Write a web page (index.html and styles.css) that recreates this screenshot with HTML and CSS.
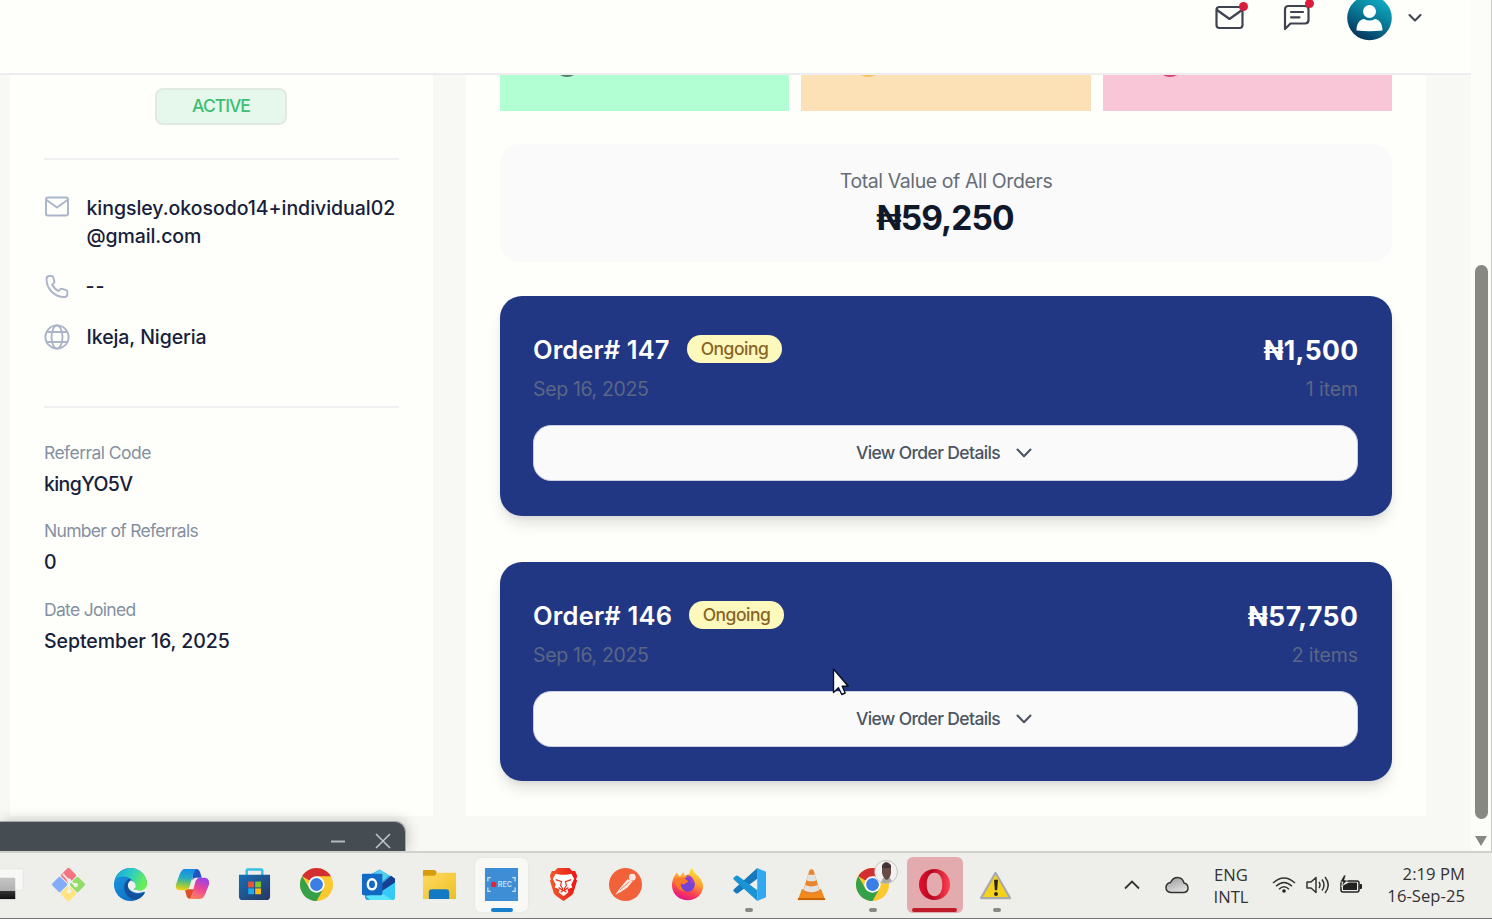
FILE: index.html
```html
<!DOCTYPE html>
<html lang="en">
<head>
<meta charset="utf-8">
<title>Customer Details</title>
<link rel="stylesheet" href="styles.css">
</head>
<body>
<div class="browser">
  <div class="page">
    <header class="topbar">
      <span class="notify"><svg width="30" height="28" viewBox="0 0 30 28" fill="none" stroke="#3f4350" stroke-width="2.2" stroke-linejoin="round" stroke-linecap="round"><rect x="1.5" y="4" width="26" height="21" rx="3"/><path d="M2 7l12.5 9L27 7"/></svg><i class="dot"></i></span>
      <span class="notify chat"><svg width="28" height="30" viewBox="0 0 28 30" fill="none" stroke="#3f4350" stroke-width="2.2" stroke-linejoin="round" stroke-linecap="round"><path d="M2 27V7.500Q2 4 5.500 4H22Q25.500 4 25.500 7.500V18Q25.500 21.500 22 21.500H7.500Z"/><path d="M8 10H20M8 15.300H16.500"/></svg><i class="dot"></i></span>
      <svg class="avatar" width="46" height="46" viewBox="0 0 46 46"><defs><linearGradient id="av" x1=".8" y1="0" x2=".25" y2="1"><stop offset="0" stop-color="#12b3c8"/><stop offset=".5" stop-color="#087795"/><stop offset="1" stop-color="#052f58"/></linearGradient></defs><circle cx="22.500" cy="23" r="22.300" fill="url(#av)"/><circle cx="22.500" cy="16.500" r="6.500" fill="#fff"/><path d="M9.500 35.500C9.500 27 14 24.500 17 24Q22.500 27 28 24C31 24.500 35.500 27 35.500 35.500Q22.500 37 9.500 35.500Z" fill="#fff"/></svg>
      <svg class="caret" width="16" height="12" viewBox="0 0 16 12" fill="none" stroke="#3f4350" stroke-width="2.100" stroke-linecap="round" stroke-linejoin="round"><path d="M2.500 3L8 8.500L13.500 3"/></svg>
    </header>
    <main class="content">
      <aside class="profile">
        <div class="status">ACTIVE</div>
        <ul class="contact">
          <li><svg width="26" height="28" viewBox="0 0 26 28" fill="none" stroke="#abb4c8" stroke-width="1.900" stroke-linejoin="round"><rect x="2" y="3.500" width="22" height="18" rx="2"/><path d="M2.500 6L13 13.500L23.500 6"/></svg><span class="email">kingsley.okosodo14+individual02<br><span class="domain">@gmail.com</span></span></li>
          <li><svg width="26" height="28" viewBox="0 0 26 28" fill="none" stroke="#abb4c8" stroke-width="1.900" stroke-linejoin="round"><path d="M2.500 7Q2.500 4 5.500 4H7.700Q8.800 4 9.200 5.200L10.400 9.300Q10.700 10.500 9.700 11.300L8.200 12.500Q10.300 17 14.800 19L16 17.500Q16.800 16.500 18 16.900L22.200 18.200Q23.400 18.600 23.400 19.800V22Q23.400 25 20.400 25C10.500 25 2.500 17 2.500 7Z"/></svg><span class="none">--</span></li>
          <li><svg width="26" height="28" viewBox="0 0 26 28" fill="none" stroke="#abb4c8" stroke-width="1.900"><circle cx="13" cy="14" r="11.600"/><ellipse cx="13" cy="14" rx="5.500" ry="11.600"/><path d="M2.300 9H23.700M2.300 19H23.700"/></svg><span class="place">Ikeja, Nigeria</span></li>
        </ul>
        <dl class="facts">
          <dt class="t-code">Referral Code</dt><dd class="v-code">kingYO5V</dd>
          <dt class="t-num">Number of Referrals</dt><dd>0</dd>
          <dt class="t-join">Date Joined</dt><dd class="v-join">September 16, 2025</dd>
        </dl>
      </aside>
      <section class="orders">
        <div class="stats"><div class="stat green"><i></i></div><div class="stat orange"><i></i></div><div class="stat pink"><i></i></div></div>
        <div class="total"><span class="total-label">Total Value of All Orders</span><strong>₦59,250</strong></div>
        <article class="order">
          <div class="row head"><h2>Order# 147</h2><span class="pill">Ongoing</span><b class="a1">₦1,500</b></div>
          <div class="row sub"><span class="date">Sep 16, 2025</span><span class="items">1 item</span></div>
          <div class="details"><span>View Order Details</span><svg width="18" height="12" viewBox="0 0 18 12" fill="none" stroke="#4b5563" stroke-width="2.100" stroke-linecap="round" stroke-linejoin="round"><path d="M2.500 2.500L9 9.200L15.500 2.500"/></svg></div>
        </article>
        <article class="order">
          <div class="row head"><h2 class="n146">Order# 146</h2><span class="pill">Ongoing</span><b class="a2">₦57,750</b></div>
          <div class="row sub"><span class="date">Sep 16, 2025</span><span class="items">2 items</span></div>
          <div class="details"><span>View Order Details</span><svg width="18" height="12" viewBox="0 0 18 12" fill="none" stroke="#4b5563" stroke-width="2.100" stroke-linecap="round" stroke-linejoin="round"><path d="M2.500 2.500L9 9.200L15.500 2.500"/></svg></div>
        </article>
      </section>
    </main>
  </div>
  <div class="scrollbar"><i class="thumb"></i><i class="arrow"></i></div>
</div>
<div class="window"><svg width="16" height="16" viewBox="0 0 16 16" stroke="#b4b9bc" stroke-width="1.800"><path d="M1 8.500H15"/></svg><svg width="16" height="16" viewBox="0 0 16 16" stroke="#c4c8ca" stroke-width="1.500"><path d="M1 1L15 15M15 1L1 15"/></svg></div>
<svg class="cursor" width="18" height="28" viewBox="0 0 18 28"><path d="M1.500 1V24.500L6.500 19.800L9.800 26.500L13.200 25L10.200 18.300H16.200Z" fill="#fff" stroke="#0b1020" stroke-width="1.400" stroke-linejoin="round"/></svg>
<footer class="taskbar">
  <div class="apps">
    <span class="app"><svg viewBox="0 0 36 36"><defs><linearGradient id="tv" x1="0" y1="0" x2="0" y2="1"><stop offset="0" stop-color="#c6c6c6"/><stop offset=".6" stop-color="#b0b0b0"/><stop offset=".63" stop-color="#333"/><stop offset="1" stop-color="#111"/></linearGradient></defs><path d="M0 2H35V24H0Z" fill="#f8f8f7" stroke="#dededb" stroke-width=".5"/><path d="M0 11H27V33H0Z" fill="url(#tv)"/></svg></span>
    <span class="app"><svg viewBox="0 0 36 36"><g transform="rotate(45 18 18)"><rect x="5.500" y="5.500" width="12" height="12" rx="1.500" fill="#f17480"/><rect x="18.500" y="5.500" width="12" height="12" rx="1.500" fill="#92dd67"/><rect x="5.500" y="18.500" width="12" height="12" rx="1.500" fill="#83adfa"/><rect x="18.500" y="18.500" width="12" height="12" rx="1.500" fill="#ffe47c"/></g><path d="M12 7L18.500 14V25M18.500 13L25 19" stroke="#f3f0ea" stroke-width="1.800" fill="none"/><circle cx="18.500" cy="14" r="2.200" fill="#f3f0ea"/><circle cx="18.500" cy="25" r="2.400" fill="#f3f0ea"/><circle cx="25.500" cy="18.500" r="2.300" fill="#f3f0ea"/></svg></span>
    <span class="app"><svg viewBox="0 0 36 36"><defs><linearGradient id="ed" x1="0" y1="0" x2="1" y2=".4"><stop offset="0" stop-color="#1a9fe5"/><stop offset=".55" stop-color="#30cfbd"/><stop offset="1" stop-color="#67ee55"/></linearGradient><linearGradient id="ee" x1="0" y1="0" x2="1" y2="1"><stop offset="0" stop-color="#1a9be5"/><stop offset="1" stop-color="#0b62b7"/></linearGradient></defs><path d="M35 18A17 17 0 1 0 33 26Q29 24 25 23L22 14Z" fill="url(#ee)"/><path d="M2 13C5 0 23-3 31 7Q35 12 35 18C34 25 26 25 22 23C23 22 24 19 21 15C17 9 7 8 2 13Z" fill="url(#ed)"/><path d="M17 12C8 16 10 31 23 34Q30 32 33 26C26 30 17 27 16 21Q15 17 19 15Z" fill="#14509d"/><path d="M18 14C14 17 15 22 18 24C23 28 29 27 34 24.500L35 23.500Q30 25.500 21 23C24 22 24 19 22 16Q20 14 18 14Z" fill="#eef1ee"/></svg></span>
    <span class="app"><svg viewBox="0 0 36 36"><defs><linearGradient id="c1" x1=".3" y1="0" x2=".2" y2="1"><stop offset="0" stop-color="#158ee5"/><stop offset=".4" stop-color="#23abc1"/><stop offset=".7" stop-color="#80c654"/><stop offset="1" stop-color="#ffd20b"/></linearGradient><linearGradient id="c2" x1=".6" y1="0" x2=".2" y2="1"><stop offset="0" stop-color="#9e42e5"/><stop offset=".45" stop-color="#e94695"/><stop offset="1" stop-color="#ff8a5c"/></linearGradient></defs><path d="M18 2H22Q25 2 26 6L27.500 11H21Q19 11 18 14Z" fill="#2453c5"/><path d="M10 23H20L17 30Q16 33 14 32.500Q12.500 32 12 30Z" fill="#e04f2c"/><path d="M10 2H22Q20 3 19 7L15 20Q14 24 10 24H5Q0 24 1 18L5 7Q7 2 10 2Z" fill="url(#c1)"/><path d="M13.500 33Q16.500 32 17.500 28L21 15Q22.500 11 26 11H31Q36 12 35 18L31 28Q29 33 25 33Z" fill="url(#c2)"/></svg></span>
    <span class="app"><svg viewBox="0 0 36 36"><defs><linearGradient id="st" x1="0" y1="0" x2="1" y2="1"><stop offset="0" stop-color="#1770b9"/><stop offset="1" stop-color="#29365f"/></linearGradient></defs><path d="M10 10V3.500Q10 2.500 11 2.500H25Q26 2.500 26 3.500V10" fill="none" stroke="#38bde5" stroke-width="2.500"/><path d="M2 8H34V30Q34 34 30 34H6Q2 34 2 30Z" fill="url(#st)"/><path d="M11.500 15h6v6h-6z" fill="#f0513b"/><path d="M18.700 15h6v6h-6z" fill="#82c528"/><path d="M11.500 22h6v6h-6z" fill="#1faaf0"/><path d="M18.700 22h6v6h-6z" fill="#fdba12"/></svg></span>
    <span class="app"><svg viewBox="0 0 36 36"><circle cx="18" cy="18" r="17" fill="#fbc82d"/><path d="M18 18L3.300 9.500A17 17 0 0 1 32.700 9.500H18Z" fill="#d32f32"/><path d="M3.300 9.500A17 17 0 0 0 18 35L25.300 22.200L18 18L10.700 22.200Z" fill="#34a049"/><circle cx="18" cy="18" r="8.400" fill="#fff"/><circle cx="18" cy="18" r="6.600" fill="#397fe5"/></svg></span>
    <span class="app"><svg viewBox="0 0 36 36"><path d="M4 11L19 2.500L35 12V30Q35 34 31 34H8Q4 34 4 30Z" fill="#2ba0e0"/><path d="M8 10L19 2.500L29 9L18 18Z" fill="#53d0ed"/><path d="M17 21L31 9L35 12V16L20 26Z" fill="#173f91"/><path d="M20 26L35 16V30Q35 34 31 34H9Z" fill="#35c9f6"/><path d="M5 30L20 26L32 34H9Z" fill="#58e4fb"/><rect x="1" y="7" width="21" height="22" rx="1.500" fill="#126ac4"/><ellipse cx="11.300" cy="17.800" rx="4.300" ry="5.200" fill="none" stroke="#fff" stroke-width="2.500"/></svg></span>
    <span class="app"><svg viewBox="0 0 36 36"><defs><linearGradient id="fo" x1="0" y1="0" x2="1" y2="1"><stop offset="0" stop-color="#ffda62"/><stop offset="1" stop-color="#eebf24"/></linearGradient></defs><path d="M1 4Q1 3 2 3H12Q15 3 15 6V12H1Z" fill="#d69c0a"/><path d="M1 9H13L16 6H35V33H1Z" fill="url(#fo)"/><path d="M7 33V26Q7 23 10 23H25Q28 23 28 26V33Z" fill="#1479c4"/></svg></span>
    <span class="app active"><svg viewBox="0 0 36 36"><path d="M1 1H35V35H1Z" fill="#3e8ed6"/><path d="M7 11H4V15M29 11H32V15M7 25H4V21M29 25H32V21" fill="none" stroke="#c8e1f4" stroke-width="1.300"/><circle cx="10" cy="18" r="2.800" fill="#dd263b"/><text x="14.200" y="20.800" class="rec">REC</text></svg><i class="run blue"></i></span>
    <span class="app"><svg viewBox="0 0 36 36"><defs><linearGradient id="br"><stop offset="0" stop-color="#f05a2b"/><stop offset="1" stop-color="#ec1414"/></linearGradient></defs><path d="M12 1H24L27 4L30 4L32 9L31 13L32 14L28 27Q27 29 18 35Q9 29 8 27L4 14L5 13L4 9L6 4H9Z" fill="url(#br)"/><path d="M10 7L15 8H21L26 7L29 12L26 18L27 21L22 23L23 26L18 30L13 26L14 23L9 21L10 18L7 12Z" fill="#fff"/><path d="M10 13L16 15L15 19L17 22V24L13 21M26 13L20 15L21 19L19 22V24L23 21M15 26L18 24L21 26" fill="none" stroke="#ed2d20" stroke-width="1.200"/></svg></span>
    <span class="app"><svg viewBox="0 0 36 36"><circle cx="18" cy="18" r="17" fill="#f1623a"/><path d="M7.500 28.500L12 22L20 12.500L25.500 14.500L20 21L13.500 25.500Z" fill="#fde8df"/><circle cx="25" cy="10.500" r="3.500" fill="#fde8df"/><path d="M12 24L22 15" stroke="#ee714e" stroke-width=".9"/></svg></span>
    <span class="app"><svg viewBox="0 0 36 36"><defs><linearGradient id="ff" x1=".8" y1="0" x2=".4" y2="1"><stop offset="0" stop-color="#fff33f"/><stop offset=".45" stop-color="#ff9b2d"/><stop offset=".75" stop-color="#fb4154"/><stop offset="1" stop-color="#e31587"/></linearGradient></defs><path d="M7 6L10 10L14 5L15 9Q18 8 20 7Q20 3 23 1Q25 7 29 9Q34 15 34 20C33 39 3 39 2 19Q2 12 7 6Z" fill="url(#ff)"/><circle cx="18" cy="18" r="7.500" fill="#7542d6"/><path d="M5 13Q12 7 19 15L14 18L11 17Q11 23 16 25Q6 25 5 13Z" fill="#fc7a29"/><path d="M17 10Q23 10 23 17" stroke="#a83bc8" stroke-width="3" fill="none"/></svg></span>
    <span class="app"><svg viewBox="0 0 36 36"><path d="M26 1L35 5V31L26 35Z" fill="#31a8f0"/><path d="M26 1V12L6 27Q4 28 3 26L1.500 25Q1 24 2 23Z" fill="#1579bc"/><path d="M26 35V24L6 9Q4 8 3 10L1.500 11Q1 12 2 13Z" fill="#1b94d6"/></svg><i class="run"></i></span>
    <span class="app"><svg viewBox="0 0 36 36"><path d="M8 23H28L32 34H4Z" fill="#f28a1d"/><path d="M16 3Q18 1.500 20 3L27 26Q18 31 9 26Z" fill="#e9852d"/><path d="M14.500 8H21.500L23 13.500Q18 16 13 13.500ZM11.500 18.500Q18 21.500 24.500 18.500L26 24Q18 28 10 24Z" fill="#e3e2df"/><path d="M4 32H32V34H4Z" fill="#c96205"/></svg></span>
    <span class="app"><svg viewBox="0 0 36 36"><circle cx="18" cy="18" r="17" fill="#fbc82d"/><path d="M18 18L3.300 9.500A17 17 0 0 1 32.700 9.500H18Z" fill="#d32f32"/><path d="M3.300 9.500A17 17 0 0 0 18 35L25.300 22.200L18 18L10.700 22.200Z" fill="#34a049"/><circle cx="18" cy="18" r="8.400" fill="#fff"/><circle cx="18" cy="18" r="6.600" fill="#397fe5"/></svg><svg class="face" viewBox="0 0 24 24"><circle cx="12" cy="12" r="11.500" fill="#f2f1ef" stroke="#999" stroke-width=".5"/><path d="M7 22L9 18H16L18 21Q13 25 7 22Z" fill="#aaa"/><path d="M8 5Q12-1 17 5V13Q16 19 12.500 20Q9 18 8 13Z" fill="#684a44"/><path d="M8 6Q12-1 17 6V8H8Z" fill="#40343a"/></svg><i class="run"></i></span>
    <span class="app opera"><svg viewBox="0 0 36 36"><defs><linearGradient id="op" x1="0" x2="1"><stop offset="0" stop-color="#e4102c"/><stop offset=".4" stop-color="#b40920"/><stop offset="1" stop-color="#ff4054"/></linearGradient></defs><path fill-rule="evenodd" d="M18 2C9 2 2 9 2 18S9 34 18 34S34 27 34 18S27 2 18 2ZM18 6C23 6 26 11 26 18S23 30 18 30S10 25 10 18S13 6 18 6Z" fill="url(#op)"/></svg><i class="run red"></i></span>
    <span class="app"><svg viewBox="0 0 36 36"><path d="M17 6L32 32H2Z" fill="#f4d21c" stroke="#aaa" stroke-width="2.200" stroke-linejoin="round"/><path d="M15.500 13H19.500L18.700 24H16.300Z" fill="#282411"/><circle cx="17.500" cy="27.800" r="2" fill="#282411"/></svg><i class="run"></i></span>
  </div>
  <div class="tray">
    <svg class="up" width="18" height="12" viewBox="0 0 18 12" fill="none" stroke="#333" stroke-width="1.800"><path d="M2 9.500L9 2.500L16 9.500"/></svg>
    <svg class="cloud" width="26" height="20" viewBox="0 0 26 20"><defs><linearGradient id="cl" x1="0" y1="0" x2=".5" y2="1"><stop offset="0" stop-color="#999"/><stop offset="1" stop-color="#ddd"/></linearGradient></defs><path d="M7 17.500Q2 17 2 12.500Q2 8.500 6.500 7.500Q9 2.500 13.500 2.500Q18.500 2.500 20 8Q24 9 24 13Q24 17 20 17.500Z" fill="url(#cl)" stroke="#333" stroke-width="1.500"/></svg>
    <div class="lang">ENG<br>INTL</div>
    <svg class="wifi" width="24" height="20" viewBox="0 0 24 20" fill="none" stroke="#333" stroke-width="1.500"><path d="M1 8Q12-2 23 8M4 11.300Q12 3.800 20 11.300M7 14.300Q12 9.200 17 14.300"/><circle cx="12" cy="16" r="1.800" fill="#222" stroke="none"/></svg>
    <svg class="vol" width="26" height="20" viewBox="0 0 26 20" fill="none" stroke="#333" stroke-width="1.500" stroke-linejoin="round"><path d="M2 7H6L11 2.500V17.500L6 13H2Z"/><path d="M14 7Q16 10 14 13M17 4.500Q21 10 17 15.500M20 2Q26.500 10 20 18"/></svg>
    <svg class="bat" width="24" height="20" viewBox="0 0 24 20"><rect x="2" y="6" width="18" height="11" rx="2" fill="none" stroke="#222" stroke-width="1.500"/><path d="M4 15V10.500L10 7.500H18V15Z" fill="#222"/><path d="M20.500 9H22Q23 9 23 10V13Q23 14 22 14H20.500Z" fill="#222"/><path d="M5 0L1 7H4L2.500 12L8.500 5H5.500L7 0Z" fill="#222" stroke="#eeeeea" stroke-width=".7"/></svg>
    <div class="clock">2:19 PM<br>16-Sep-25</div>
  </div>
</footer>
</body>
</html>
```
FILE: styles.css
```css
* { box-sizing: border-box; }
body { margin: 0; width: 1492px; height: 919px; overflow: hidden; position: relative; display: flex; flex-direction: column; font-family: Inter, "Liberation Sans", sans-serif; color: #17203a; background: #f8f9f5; }
svg { display: block; flex: none; }
h2, ul, dl, dd { margin: 0; padding: 0; }
.browser { display: flex; height: 851px; flex: none; }
.page { width: 1471px; display: flex; flex-direction: column; }
.topbar { height: 75px; flex: none; background: #fefffb; border-bottom: 2px solid #ededf0; display: flex; justify-content: flex-end; align-items: flex-start; padding-right: 48px; }
.notify { position: relative; margin: 3px 38px 0 0; }
.notify.chat { margin: 2px 36.5px 0 0; }
.dot { position: absolute; right: -3px; top: -1px; width: 9px; height: 9px; border-radius: 50%; background: #d91d3b; }
.chat .dot { right: -3px; top: -3px; }
.avatar { margin-top: -5px; }
.caret { margin: 12px 0 0 14px; }
.content { display: flex; gap: 33px; padding-left: 10px; height: 741px; }
.profile { width: 423px; background: #fefffb; padding: 13px 34px 0; }
.status { width: 132px; height: 37px; margin: 0 0 0 111px; border: 2px solid #e2e9e3; border-radius: 8px; background: #e6f7ec; color: #3dbe73; font-size: 17.500px; font-weight: 500; letter-spacing: -1px; display: flex; align-items: center; justify-content: center; padding-bottom: 2px; }
.contact { list-style: none; margin-top: 33px; height: 250px; border: solid #f0f1f3; border-width: 2px 0; padding-top: 34px; }
.contact li { display: flex; gap: 16.500px; font-size: 19.500px; font-weight: 500; line-height: 28px; margin-bottom: 23px; }
.contact li:first-child { margin-bottom: 22px; }
.email { letter-spacing: -.04px; white-space: nowrap; }
.domain { letter-spacing: -.1px; }
.none { letter-spacing: 1px; margin-left: -1px; }
.place { letter-spacing: -.07px; }
.facts { padding-top: 29.700px; }
dt { font-size: 17.500px; line-height: 30px; color: #8590a2; font-weight: 400; letter-spacing: -.7px; }
.t-code { letter-spacing: -.55px; }
dd { font-size: 19.500px; line-height: 33px; font-weight: 500; margin-bottom: 15.700px; letter-spacing: -.3px; }
.v-code { letter-spacing: -.6px; }
.v-join { letter-spacing: -.07px; }
.orders { width: 960px; background: #fefffb; padding: 0 34px; }
.stats { display: grid; grid-template-columns: 1fr 1fr 1fr; gap: 12px; height: 36px; }
.stat { position: relative; overflow: hidden; }
.green { background: #b2ffd3; color: #4e8068; }
.orange { background: #fce0b6; color: #f5c35c; }
.pink { background: #f9c6d7; color: #dc3f6e; }
.stat i { position: absolute; left: 54px; top: -24px; width: 26px; height: 26px; border-radius: 50%; background: currentColor; }
.total { height: 118px; margin-top: 33px; border-radius: 20px; background: #fafafb; display: flex; flex-direction: column; align-items: center; padding-top: 23px; }
.total-label { font-size: 19.500px; line-height: 28px; color: #666d78; letter-spacing: -.4px; }
.total strong { font-size: 33.500px; line-height: 47px; font-weight: 700; letter-spacing: -.9px; margin-right: 2px; color: #10182c; }
.order { height: 220px; margin-top: 34px; border-radius: 22px; background: #223784; padding: 35px 34px 0 33px; box-shadow: 0 10px 15px -3px rgba(0,0,0,.12), 0 3px 6px -2px rgba(0,0,0,.08); }
.order + .order { margin-top: 46px; height: 219px; }
.row { display: flex; align-items: center; }
.head { height: 36px; }
h2 { color: #fff; font-size: 25.500px; line-height: 36px; font-weight: 600; letter-spacing: .1px; width: 154px; white-space: nowrap; padding-top: 1px; }
h2.n146 { width: 156px; letter-spacing: .2px; }
.pill { width: 95px; height: 28px; border-radius: 14px; background: #fdf9bd; color: #886425; font-size: 17.500px; font-weight: 500; letter-spacing: -.5px; display: flex; align-items: center; justify-content: center; padding-bottom: 1px; }
.head b { margin-left: auto; margin-right: -.4px; color: #fff; font-size: 26.500px; font-weight: 700; letter-spacing: .35px; line-height: 34px; padding-top: 1px; }
.head .a2 { letter-spacing: .5px; }
.sub { justify-content: space-between; height: 43px; padding-top: 1px; color: #5b6684; font-size: 19.500px; letter-spacing: -.1px; }
.date { letter-spacing: -.35px; }
.details { margin-top: 15px; height: 56px; border-radius: 18px; background: #fafafb; border: 1px solid #c9cde0; display: flex; align-items: center; justify-content: center; gap: 15px; padding: 0 2px 1px 0; color: #4b5563; font-size: 17.500px; font-weight: 500; letter-spacing: -.63px; }
.scrollbar { position: relative; width: 21px; background: #fcfdf9; border-right: 1px solid #c9cac6; }
.thumb { position: absolute; left: 4px; top: 265px; width: 13px; height: 554px; border-radius: 7px; background: #888883; }
.arrow { position: absolute; left: 4px; top: 836px; border: 6.500px solid transparent; border-top: 10px solid #888883; border-bottom: 0; }
.window { position: absolute; left: 0; top: 821px; width: 406px; height: 30px; background: #454d53; border: 1px solid #a4a9aa; border-left: 0; border-bottom: 0; border-radius: 0 11px 0 0; box-shadow: 2px -1px 14px rgba(0,0,0,.2); display: flex; justify-content: flex-end; gap: 29px; padding: 11px 14px 0; overflow: hidden; }
.cursor { position: absolute; left: 832px; top: 668px; }
.taskbar { position: relative; height: 68px; flex: none; background: #eeeeea; border-top: 2px solid #cfd1cb; border-bottom: 1px solid #777; display: flex; justify-content: space-between; }
.apps { display: flex; margin-left: -24px; padding-top: 3.500px; }
.app { position: relative; width: 61.870px; height: 56px; display: flex; align-items: center; justify-content: center; }
.app > svg { width: 35px; height: 35px; position: relative; }
.app.active::before, .app.opera::before { content: ""; position: absolute; left: 4px; top: 1px; width: 53px; height: 54px; border-radius: 6px; background: #f8f8f5; box-shadow: 0 0 2px #dcdcd9; }
.app.opera::before { left: 3px; top: 0; width: 56px; height: 56px; background: #e4abae; box-shadow: none; }
.rec { font: 700 7.200px Inter, sans-serif; fill: #bedaf2; }
.run { position: absolute; left: 27px; bottom: 1px; width: 8px; height: 4px; border-radius: 2px; background: #888; }
.run.blue { width: 22px; left: 20px; background: #1880cb; }
.run.red { width: 45px; left: 8.500px; background: #bd1b28; }
.app > svg.face { position: absolute; width: 24px; height: 24px; left: 32px; top: 3px; }
.tray { display: flex; align-items: center; padding: 0 27px 2px 0; font: 16.600px/22.500px "Open Sans", sans-serif; color: #333; }
.cloud { margin-left: 23px; }
.lang { width: 36px; margin-left: 23px; padding-top: 3px; text-align: center; }
.wifi { margin-left: 23px; }
.vol { margin-left: 9px; }
.bat { margin-left: 8px; }
.clock { width: 82px; margin-left: 20px; padding-top: 1px; text-align: right; white-space: nowrap; letter-spacing: .05px; }
```
